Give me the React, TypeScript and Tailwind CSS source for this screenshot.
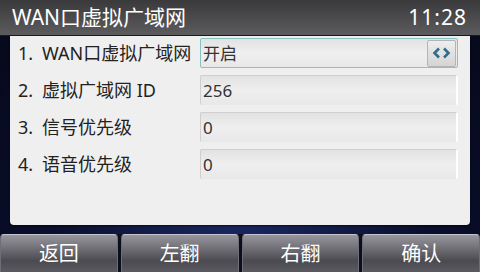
const rows = [
  { n: '1.', label: 'WAN口虚拟广域网', value: '开启', select: true },
  { n: '2.', label: '虚拟广域网 ID', value: '256' },
  { n: '3.', label: '信号优先级', value: '0' },
  { n: '4.', label: '语音优先级', value: '0' },
];

const keys = ['返回', '左翻', '右翻', '确认'];

const font = { fontFamily: '"Noto Sans", "Noto Sans CJK SC", sans-serif' };

export default function App() {
  return (
    <div
      className="flex h-[272px] w-[480px] flex-col overflow-hidden bg-[radial-gradient(ellipse_at_50%_100%,#1c2a66_0%,#0a0f2e_55%,#060818_100%)]"
      style={font}
    >
      {/* title bar */}
      <div className="flex h-[36px] shrink-0 items-center justify-between border-b border-[#1a1a1a] bg-gradient-to-b from-[#3a3a3c] to-[#5c5c5e] pl-[12px] pr-[13px] text-white">
        <span className="text-[21px] leading-none">WAN口虚拟广域网</span>
        <span className="text-[21px] leading-none tracking-[1px]">11:28</span>
      </div>

      {/* settings panel */}
      <div className="mx-[10px] flex h-[189px] shrink-0 flex-col gap-[7px] rounded-b-[4px] bg-[#efefef] pt-[2px] pr-[12px] shadow-[0_1px_2px_rgba(0,0,0,0.6)]">
        {rows.map((r) => (
          <div key={r.n} className="flex h-[30px] items-center">
            <div className="flex w-[190px] items-center pl-[8px] text-[18px] leading-none text-[#222]">
              <span className="w-[24px]">{r.n}</span>
              <span>{r.label}</span>
            </div>
            <div
              className={
                'flex h-[30px] flex-1 items-center justify-between rounded-[2px] bg-gradient-to-b from-[#e2e2e2] via-[#efefef] to-[#e8e8e8] pl-[2px] text-[17px] leading-none text-[#333] ' +
                (r.select
                  ? 'border border-[#86c4c4]'
                  : 'border-l border-t border-[#cfcfcf] border-r-2 border-r-white')
              }
            >
              <span>{r.value}</span>
              {r.select && (
                <div className="mr-[1px] flex h-[27px] w-[29px] items-center justify-center rounded-[2px] border border-[#b4b4b4] bg-gradient-to-b from-[#eeeeee] to-[#d4d4d4]">
                  <svg width="19" height="12" viewBox="0 0 19 12" fill="none" stroke="#2e6d8c" strokeWidth="2.6">
                    <path d="M7 1.5 L2.5 6 L7 10.5" />
                    <path d="M12 1.5 L16.5 6 L12 10.5" />
                  </svg>
                </div>
              )}
            </div>
          </div>
        ))}
      </div>

      {/* soft keys */}
      <div className="mt-auto grid h-[38px] grid-cols-4 gap-[3px] bg-[#0c0e1c]">
        {keys.map((k) => (
          <div
            key={k}
            className="flex items-center justify-center rounded-t-[4px] border-x border-t border-x-[#6e6e78] border-t-[#c4c4d0] bg-[linear-gradient(to_bottom,#96969c_0%,#76767c_30%,#4a4a50_70%,#5a5a60_100%)] text-[20px] leading-none text-white"
          >
            {k}
          </div>
        ))}
      </div>
    </div>
  );
}
